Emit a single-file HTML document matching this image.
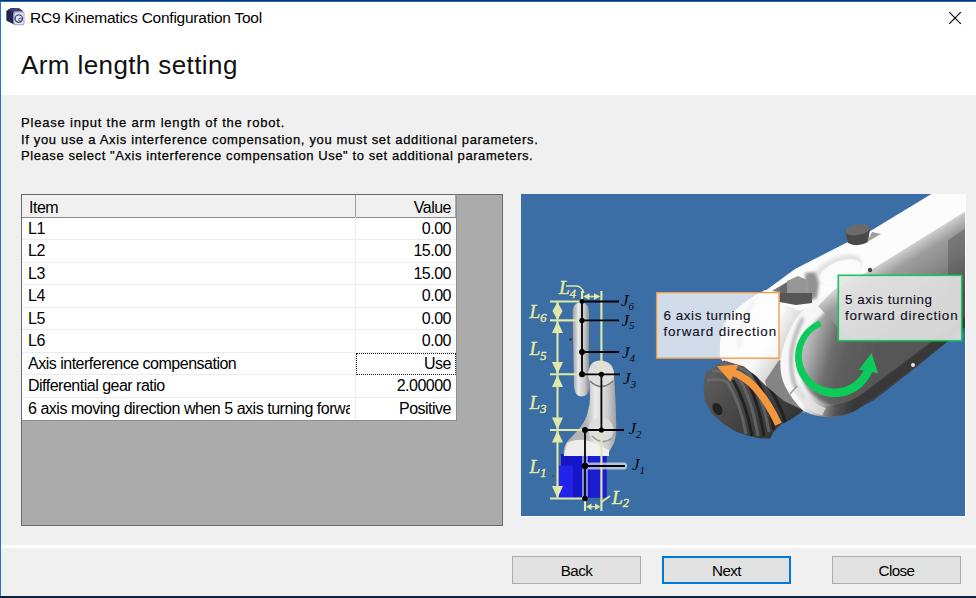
<!DOCTYPE html>
<html lang="en">
<head>
<meta charset="utf-8">
<title>RC9 Kinematics Configuration Tool</title>
<style>
html,body{margin:0;padding:0;}
body{width:976px;height:598px;overflow:hidden;background:#f0f0f0;font-family:"Liberation Sans",sans-serif;color:#000;position:relative;}
.abs{position:absolute;}
.t{position:absolute;white-space:nowrap;line-height:1;}
#frameTop{left:0;top:0;width:976px;height:2px;background:#0d2f5e;}
#frameTop2{left:0;top:1px;width:976px;height:1px;background:#1a6fc9;}
#frameLeft{left:0;top:1px;width:1px;height:596px;background:#1a78d6;}
#frameBottom{left:0;top:596.4px;width:976px;height:1.6px;background:#0c2340;}
#head{left:1px;top:2px;width:975px;height:93px;background:#fff;}
#titletxt{left:30px;top:10px;font-size:15.5px;letter-spacing:-0.25px;}
#h1{left:21px;top:52px;font-size:26px;color:#111;letter-spacing:0.4px;}
.ins{left:21px;font-size:13px;letter-spacing:0.8px;-webkit-text-stroke:0.25px #000;}
#panel{left:21px;top:194px;width:480px;height:329.5px;background:#ababab;border:1px solid #6a6a6a;}
#grid{left:22px;top:195px;width:434px;height:225px;background:#fff;box-shadow:1px 1px 0 #8f8f8f;}
.row{position:absolute;left:0;width:434px;height:22.56px;border-bottom:1px solid #ececec;box-sizing:border-box;}
.row .c1{position:absolute;left:6px;top:2px;font-size:16px;letter-spacing:-0.5px;white-space:nowrap;width:322px;overflow:hidden;}
.row .c2{position:absolute;right:5px;top:2px;font-size:16px;letter-spacing:-0.5px;white-space:nowrap;text-align:right;}
#hdr{position:absolute;left:0;top:0;width:434px;height:22px;background:#f0f0f0;border-bottom:1px solid #8a8a8a;}
#coldiv{left:333px;top:0;width:1px;height:225px;background:#ececec;}
#hdrdiv{left:333px;top:0;width:1px;height:22px;background:#a0a0a0;}
#focus{left:334px;top:158px;width:98px;height:20px;border:1px dotted #222;}
#sep{left:1px;top:544.5px;width:975px;height:3px;background:#fff;}
.btn{position:absolute;top:556px;width:127px;height:26px;background:#e1e1e1;border:1px solid #adadad;font-size:15.2px;letter-spacing:-0.6px;text-align:center;line-height:28px;}
#next{border:2px solid #0078d7;width:125px;height:24px;line-height:26px;}
#pic{left:521px;top:194px;width:444px;height:321.5px;}
</style>
</head>
<body>
<div class="abs" id="head"></div>
<div class="abs" id="frameTop"></div>
<div class="abs" id="frameTop2"></div>
<div class="abs" id="frameLeft"></div>
<div class="abs" id="frameBottom"></div>

<svg class="abs" id="appicon" style="left:4px;top:6px" width="22" height="21" viewBox="4 6 22 21">
  <g filter="url(#ib)">
  <path d="M6.3 11 L11 8 L19.5 8.6 L23.5 11.5 L14 12.5 L14 24.5 L6.3 20.5 Z" fill="#22264f"/>
  <path d="M11 8 L19.5 8.6 L23.5 11.5 L14 12 L8 10 Z" fill="#3c4170"/>
  <rect x="13.2" y="11.3" width="11.3" height="14" rx="2.2" fill="#a5a9c6"/>
  <rect x="14.6" y="12.8" width="9" height="11.4" rx="1.8" fill="#e3e5f0"/>
  <circle cx="18.8" cy="18.6" r="3.7" fill="none" stroke="#454a78" stroke-width="1.3"/>
  <circle cx="20.2" cy="19.6" r="1.6" fill="#d8dae8" stroke="#50558a" stroke-width="1"/>
  </g>
  <defs><filter id="ib"><feGaussianBlur stdDeviation="0.45"/></filter></defs>
</svg>
<div class="t" id="titletxt">RC9 Kinematics Configuration Tool</div>
<svg class="abs" style="left:947px;top:11px" width="15" height="15" viewBox="0 0 15 15"><path d="M2.2 1.2 L13.8 12.8 M13.8 1.2 L2.2 12.8" stroke="#000" stroke-width="1.15" fill="none"/></svg>

<div class="t" id="h1">Arm length setting</div>

<div class="t ins" style="top:116px">Please input the arm length of the robot.</div>
<div class="t ins" style="top:133px;letter-spacing:0.66px">If you use a Axis interference compensation, you must set additional parameters.</div>
<div class="t ins" style="top:149px;letter-spacing:0.58px">Please select "Axis interference compensation Use" to set additional parameters.</div>

<div class="abs" id="panel"></div>
<div class="abs" id="grid">
  <div id="hdr"><div class="t" style="left:7px;top:4.5px;font-size:16px;letter-spacing:-0.5px">Item</div><div class="t" style="right:5px;top:4.5px;font-size:16px;letter-spacing:-0.5px">Value</div></div>
  <div class="abs" id="coldiv"></div>
  <div class="abs" id="hdrdiv"></div><div class="abs" style="left:433px;top:0;width:1px;height:22px;background:#a8a8a8"></div>
  <div class="row" style="top:22.5px"><div class="c1">L1</div><div class="c2">0.00</div></div>
  <div class="row" style="top:45.1px"><div class="c1">L2</div><div class="c2">15.00</div></div>
  <div class="row" style="top:67.6px"><div class="c1">L3</div><div class="c2">15.00</div></div>
  <div class="row" style="top:90.2px"><div class="c1">L4</div><div class="c2">0.00</div></div>
  <div class="row" style="top:112.7px"><div class="c1">L5</div><div class="c2">0.00</div></div>
  <div class="row" style="top:135.3px"><div class="c1">L6</div><div class="c2">0.00</div></div>
  <div class="row" style="top:157.8px"><div class="c1">Axis interference compensation</div><div class="c2">Use</div></div>
  <div class="row" style="top:180.4px"><div class="c1">Differential gear ratio</div><div class="c2">2.00000</div></div>
  <div class="row" style="top:202.9px;border-bottom:none"><div class="c1" style="letter-spacing:-0.47px">6 axis moving direction when 5 axis turning forward</div><div class="c2">Positive</div></div>
  <div class="abs" id="focus"></div>
</div>

<svg class="abs" id="pic" viewBox="521 194 444 321.5" preserveAspectRatio="none">
  <defs>
    <linearGradient id="gLink" x1="0" x2="1" y1="0" y2="0">
      <stop offset="0" stop-color="#9c9c9c"/><stop offset="0.35" stop-color="#e9e9e9"/><stop offset="0.75" stop-color="#c4c4c4"/><stop offset="1" stop-color="#8e8e8e"/>
    </linearGradient>
    <linearGradient id="gLink2" gradientUnits="userSpaceOnUse" x1="586" x2="617" y1="0" y2="0">
      <stop offset="0" stop-color="#b4b4b4"/><stop offset="0.3" stop-color="#ececec"/><stop offset="0.7" stop-color="#cdcdcd"/><stop offset="1" stop-color="#9a9a9a"/>
    </linearGradient>
    <linearGradient id="gBase" x1="0" x2="1" y1="0" y2="0">
      <stop offset="0" stop-color="#2a2ae0"/><stop offset="0.3" stop-color="#1414cc"/><stop offset="1" stop-color="#0c0cb4"/>
    </linearGradient>
    <filter id="b05" x="-20%" y="-20%" width="140%" height="140%"><feGaussianBlur stdDeviation="0.4"/></filter>
    <filter id="b1" x="-20%" y="-20%" width="140%" height="140%"><feGaussianBlur stdDeviation="0.7"/></filter>
    <filter id="b2" x="-20%" y="-20%" width="140%" height="140%"><feGaussianBlur stdDeviation="1.6"/></filter>
    <filter id="b4" x="-20%" y="-20%" width="140%" height="140%"><feGaussianBlur stdDeviation="4"/></filter>
    <filter id="b8" x="-30%" y="-30%" width="160%" height="160%"><feGaussianBlur stdDeviation="8"/></filter>
  </defs>
  <rect x="521" y="194" width="444" height="322" fill="#3a6ea5"/>

  <!-- ===== small robot diagram ===== -->
  <g id="mini">
    <g filter="url(#b1)">
      <!-- base blue -->
      <path d="M561 454 L606.5 454 L606.5 497.5 L561 498 Z" fill="#1515c6"/>
      <path d="M558.5 465.5 L573 465.5 L573 498 L558.5 498 Z" fill="#2424ea"/>
      <path d="M590 456 L606.5 456 L606.5 497 L590 497.5 Z" fill="#1c1cd2" opacity="0.8"/>
      <!-- lower link + shoulder -->
      <path d="M589 372 Q589 361 600 360.5 Q613 361 614 372.5 L615.7 405 L616.4 430 Q616 438 614 443 L609 452 L609 456 L563.8 456 L563.8 451.5 Q564 445 567.5 441.5 L580 427.7 Q586 420 587.6 412.6 Q590 405 590 397.6 Z" fill="url(#gLink2)"/>
      <path d="M567 443 Q580 436 596 444 L609 450 L609 456 L563.8 456 Z" fill="#f2f2f2" opacity="0.9"/>
      <circle cx="601" cy="430" r="12.5" fill="#dedede" opacity="0.9"/>
      <path d="M592 436 Q602 446 612 438" stroke="#9a9a9a" stroke-width="1.6" fill="none"/>
      <!-- upper link -->
      <path d="M572.6 312 Q572.6 302.5 581 302.5 Q589 302.5 589 312 L589 388 Q589 396.5 581 396.5 Q575 396.5 574 386 Z" fill="url(#gLink)"/>
      <circle cx="601" cy="374.5" r="13" fill="#dfdfdf"/>
      <path d="M590 381 Q601 392 613 381" stroke="#777" stroke-width="1.6" fill="none"/>
    </g>
    <!-- J1 white glow -->
    <rect x="584" y="462.4" width="43" height="7.2" rx="3" fill="#fff" opacity="0.62" filter="url(#b1)"/>
    <rect x="582" y="452" width="6" height="48" rx="3" fill="#dfe3ff" opacity="0.55" filter="url(#b1)"/>
    <circle cx="570.5" cy="339.5" r="1.3" fill="#333"/>
    <circle cx="553.5" cy="476" r="1.5" fill="#555"/>
    <!-- yellow dimension lines -->
    <g filter="url(#b05)">
    <g stroke="#dfe8a6" stroke-width="2.1" fill="none">
      <path d="M557.5 301.5 V498.5"/>
      <path d="M550 301.5 H582 M550 320.4 H582 M550 374.3 H582 M550 430 H585 M550 498.5 H585"/>
      <path d="M582 291 V301 M601.4 291 V374 M601.4 430 V511 M585 498 V511"/>
      <path d="M601.4 502 L610 496" stroke-width="1.6"/>
      <path d="M566 286 H577 Q582 287 584 293" stroke-width="1.4"/>
    </g>
    <g fill="#dfe8a6">
      <!-- vertical arrowheads -->
      <path d="M557.5 302 l-5 9 h10z M557.5 320 l-5 -9 h10z"/>
      <path d="M557.5 321 l-5.5 12 h11z M557.5 374 l-5.5 -12 h11z"/>
      <path d="M557.5 375 l-5.5 12 h11z M557.5 429.5 l-5.5 -12 h11z"/>
      <path d="M557.5 430.5 l-5.5 12 h11z M557.5 498 l-5.5 -12 h11z"/>
      <!-- L4 arrows -->
      <path d="M583 296.5 l6.5 -3.3 v6.6z M600.5 296.5 l-6.5 -3.3 v6.6z"/>
      <rect x="588" y="295.7" width="7" height="1.6"/>
      <!-- L2 arrows -->
      <path d="M586 506.7 l5.5 -3.2 v6.4z M600.5 506.7 l-5.5 -3.2 v6.4z"/>
      <rect x="590" y="506" width="6" height="1.4"/>
    </g>
    </g>
    <!-- black skeleton -->
    <g stroke="#000" stroke-width="1.8" fill="none">
      <path d="M582 301.5 V374.3 H601.4 V430 H585 V498.5"/>
      <path d="M582 301.5 H619 M582 320.4 H619 M582 352 H619 M601 374.3 H620 M601 430 H624 M585 466 H625"/>
    </g>
    <g fill="#000">
      <circle cx="582" cy="301.5" r="2.4"/><circle cx="582" cy="320.4" r="2.6"/><circle cx="582" cy="352" r="3"/>
      <circle cx="582" cy="374.3" r="3"/><circle cx="601.4" cy="374.3" r="2.6"/><circle cx="585" cy="430" r="3"/>
      <circle cx="601.4" cy="430" r="2.6"/><circle cx="585" cy="466" r="3.2"/><circle cx="585" cy="498.5" r="2.8"/>
    </g>
    <!-- labels -->
    <g font-family="'Liberation Serif',serif" font-style="italic" fill="#37566f" font-size="19.5" transform="translate(1 1)" opacity="0.8">
      <text x="559" y="294">L<tspan font-size="12.5" dy="4">4</tspan></text>
      <text x="529.5" y="317.5">L<tspan font-size="12.5" dy="4.3">6</tspan></text>
      <text x="529.5" y="355">L<tspan font-size="12.5" dy="4.5">5</tspan></text>
      <text x="529.5" y="409">L<tspan font-size="12.5" dy="4">3</tspan></text>
      <text x="529.5" y="473">L<tspan font-size="12.5" dy="4">1</tspan></text>
      <text x="612" y="503.5">L<tspan font-size="12.5" dy="3.5">2</tspan></text>
    </g>
    <g font-family="'Liberation Serif',serif" font-style="italic" fill="#e3eab0" font-size="19.5" stroke="#e3eab0" stroke-width="0.45">
      <text x="559" y="294">L<tspan font-size="12.5" dy="4">4</tspan></text>
      <text x="529.5" y="317.5">L<tspan font-size="12.5" dy="4.3">6</tspan></text>
      <text x="529.5" y="355">L<tspan font-size="12.5" dy="4.5">5</tspan></text>
      <text x="529.5" y="409">L<tspan font-size="12.5" dy="4">3</tspan></text>
      <text x="529.5" y="473">L<tspan font-size="12.5" dy="4">1</tspan></text>
      <text x="612" y="503.5">L<tspan font-size="12.5" dy="3.5">2</tspan></text>
    </g>
    <g font-family="'Liberation Serif',serif" font-style="italic" fill="#0a0a0a" font-size="17">
      <text x="621" y="306">J<tspan font-size="11" dy="3.5">6</tspan></text>
      <text x="621.5" y="325.5">J<tspan font-size="11" dy="3.5">5</tspan></text>
      <text x="622" y="358">J<tspan font-size="11" dy="3.5">4</tspan></text>
      <text x="623" y="384">J<tspan font-size="11" dy="3.5">3</tspan></text>
      <text x="628.5" y="434">J<tspan font-size="11" dy="3.5">2</tspan></text>
      <text x="632" y="470">J<tspan font-size="11" dy="3.5">1</tspan></text>
    </g>
  </g>
  <!-- BIGARM -->
  <defs>
    <clipPath id="picclip"><rect x="521" y="194" width="444" height="321.5"/></clipPath>
    <linearGradient id="gRim" gradientUnits="userSpaceOnUse" x1="803" y1="395" x2="856" y2="410">
      <stop offset="0" stop-color="#f7f7f7"/><stop offset="0.3" stop-color="#c0c0c0"/><stop offset="0.65" stop-color="#6a6a6a"/><stop offset="1" stop-color="#404040"/>
    </linearGradient>
    <linearGradient id="gFace" gradientUnits="userSpaceOnUse" x1="798" y1="345" x2="875" y2="368">
      <stop offset="0" stop-color="#c8c8c8"/><stop offset="0.15" stop-color="#b0b0b0"/><stop offset="0.3" stop-color="#8c8c8c"/>
      <stop offset="0.42" stop-color="#6e6e6e"/><stop offset="0.6" stop-color="#5e5e5e"/><stop offset="1" stop-color="#565656"/>
    </linearGradient>
    <linearGradient id="gTopBand" gradientUnits="userSpaceOnUse" x1="905" y1="247" x2="944.4" y2="310.8">
      <stop offset="0" stop-color="#d6d6d6" stop-opacity="1"/><stop offset="0.08" stop-color="#bdbdbd" stop-opacity="1"/><stop offset="0.2" stop-color="#9c9c9c" stop-opacity="1"/><stop offset="0.48" stop-color="#878787" stop-opacity="1"/><stop offset="0.78" stop-color="#6c6c6c" stop-opacity="0.8"/><stop offset="1" stop-color="#5a5a5a" stop-opacity="0"/>
    </linearGradient>
    <linearGradient id="gBot" gradientUnits="userSpaceOnUse" x1="815" y1="410" x2="856" y2="410">
      <stop offset="0" stop-color="#343434" stop-opacity="0"/><stop offset="1" stop-color="#343434" stop-opacity="0.78"/>
    </linearGradient>
    <linearGradient id="gFlange" gradientUnits="userSpaceOnUse" x1="720" y1="365" x2="790" y2="430">
      <stop offset="0" stop-color="#5c5c5c"/><stop offset="0.5" stop-color="#444"/><stop offset="1" stop-color="#333"/>
    </linearGradient>
    <linearGradient id="gHousing" gradientUnits="userSpaceOnUse" x1="722" y1="340" x2="795" y2="380">
      <stop offset="0" stop-color="#ebebeb"/><stop offset="0.45" stop-color="#fafafa"/><stop offset="0.75" stop-color="#d2d2d2"/><stop offset="1" stop-color="#9a9a9a"/>
    </linearGradient>
  </defs>
  <g clip-path="url(#picclip)">
   <g filter="url(#b1)">
    <!-- J6 housing (white cylinder) -->
    <path d="M765 290 Q735 305 723 326 Q719 340 720 358 L724 363 L742 370 L756 380 L768 392 L783 404 L804 413 L812 400 L800 330 L830 290 Z" fill="url(#gHousing)"/>
    <!-- crease on housing -->
    <path d="M754 301 Q738 322 739 349" fill="none" stroke="#b9b9b9" stroke-width="3" filter="url(#b2)"/>
    <!-- shadow side of housing between housing and rim -->
    <path d="M779 360 L765 381 L768 392 L783 404 L804 413 L809 405 Q790 390 784 362 Z" fill="#848484"/>
    <!-- flange (dark discs) -->
    <clipPath id="flclip"><path d="M724 360.5 L716.5 365.8 L705 373.5 L703.4 387.4 L705 401 L711.8 413.5 L724 424.3 L736.5 432 L748.8 436 L759.5 438.3 L770.3 438.5 L773.4 432 L781 424.3 L790.3 419.7 L804 410.5 L784 401 L767 387 L756.5 376.6 L744 366.6 Z"/></clipPath>
    <path d="M724 360.5 L716.5 365.8 L705 373.5 L703.4 387.4 L705 401 L711.8 413.5 L724 424.3 L736.5 432 L748.8 436 L759.5 438.3 L770.3 438.5 L773.4 432 L781 424.3 L790.3 419.7 L804 410.5 L784 401 L767 387 L756.5 376.6 L744 366.6 Z" fill="url(#gFlange)"/>
    <g clip-path="url(#flclip)">
      <g fill="none" stroke="#6e6e6e" stroke-width="3" opacity="0.75">
        <path d="M707 380 Q722 378 728 383 Q741 405 746 434"/>
        <path d="M712 371 Q730 370 739 378 Q752 400 758 436"/>
        <path d="M720 364 Q742 366 749 374 Q763 397 769 432"/>
      </g>
      <g fill="none" stroke="#1d1d1d" stroke-width="3" opacity="0.85">
        <path d="M733 380 Q746 402 752 436"/>
        <path d="M744 376 Q758 398 764 436"/>
        <path d="M753 373 Q768 396 774 430"/>
        <path d="M764 380 Q778 398 786 424"/>
      </g>
      <ellipse cx="717.5" cy="409" rx="4.5" ry="6.5" transform="rotate(-30 717.5 409)" fill="#232323"/>
    </g>
    <!-- near prong: white rim (outer silhouette) -->
    <path d="M966 209 L870 268 L836 285 L811 303 Q797 313 790 330 Q783 344 780.5 360 Q779.5 375 785 386 Q792 400 803.4 411 Q815 417 833 417.5 Q850 415 861 407 L874 400 L914 369 L947 342 L966 326 Z" fill="url(#gRim)"/>
    <path d="M803 318 Q794 335 791.5 352 Q790 370 794 383 Q798 392 805 399" fill="none" stroke="#a8a8a8" stroke-width="4" opacity="0.8" filter="url(#b2)"/>
    <!-- gray inner face -->
    <path d="M966 209 L872 268 L850 291 L826 311 Q806 328 800 348 Q797 372 806 388 Q818 403 836 406 Q850 405 862 396 L947 332 L966 316 Z" fill="url(#gFace)" filter="url(#b2)"/>
    <!-- light band along top of face -->
    <path d="M966 209 L870 268 L836 288 L818 306 L845 335 L880 345 L966 345 Z" fill="url(#gTopBand)"/>
    <!-- darker right end -->
    <path d="M948 240 L966 228 L966 330 L948 343 Z" fill="#4a4a4a" opacity="0.4" filter="url(#b1)"/>
    <!-- bottom edge shading -->
    <path d="M812 418 Q850 417 861 407 L947 342 L966 326 L966 316 L862 394 Q850 404 816 408 Z" fill="url(#gBot)" filter="url(#b1)"/>
    <path d="M793 390 Q803 410 822 415.5 L826 408 Q811 404 801 385 Z" fill="#e8e8e8" opacity="0.75" filter="url(#b1)"/>
    <path d="M797 386 L790 394" stroke="#999" stroke-width="1.5"/>
    <!-- top white strip of forearm incl. area down to the rim -->
    <path d="M933 193 L966 193 L966 211 L871 270 L838 287 L814 303 L800 311 L779 302 L765 291 L795 269 L840 246 L872 230 Z" fill="#fcfcfc"/>
    <!-- concave dome on top strip -->
    <ellipse cx="838" cy="269" rx="25" ry="12" transform="rotate(-22 838 269)" fill="#e3e3e3" filter="url(#b2)"/>
    <ellipse cx="840" cy="272" rx="22" ry="10.5" transform="rotate(-22 840 272)" fill="#fbfbfb" filter="url(#b1)"/>
    <!-- recess block -->
    <path d="M805 273 L815 272 L819 284 L817 298 L806 302 Z" fill="#6e6e6e" opacity="0.75" filter="url(#b2)"/>
    <path d="M772 291 L787 282 L787 293 Z" fill="#777"/>
    <path d="M780 287 L787 283 L787 293 L780 293 Z" fill="#686868"/>
    <path d="M787 281 L798 276 L807 280 L807 293 L787 293 Z" fill="#969696"/>
    <path d="M779.5 293 L812 293 L812 303 L796 305 L779.5 302 Z" fill="#565656"/>
    <!-- knob -->
    <path d="M845 230 L848 243 Q858 248 868 242 L870 229 Z" fill="#484848"/>
    <ellipse cx="857.5" cy="229.8" rx="12.5" ry="5.3" transform="rotate(-10 857.5 229.8)" fill="#6a6a6a"/>
    <path d="M867 242 L881 234 L872 232 Z" fill="#a0a0a0"/>
    <!-- little things -->
    <circle cx="870" cy="270" r="2.2" fill="#444"/>
    <circle cx="913" cy="365" r="2" fill="#e8e8e8"/>
   </g>
   <!-- orange arrow -->
   <path d="M778.4 424.2 Q757.7 380.2 733 372.5" fill="none" stroke="#f4973d" stroke-width="7.3"/>
   <path d="M716.8 366.3 L738.6 364.4 L730.3 381.4 Z" fill="#f4973d"/>
   <!-- green arrow -->
   <path d="M819.1 320.4 A40 40 0 1 0 872.6 370.8 L864.2 369.3 A32.6 32.6 0 1 1 821.8 325.9 Z" fill="#0ccb5b"/>
   <path d="M871.7 353 L858.9 369.8 L878 373.3 Z" fill="#0ccb5b"/>
   <!-- callout boxes -->
   <rect x="656.6" y="292.6" width="122.4" height="65.6" fill="#ffffff" fill-opacity="0.76" stroke="#f0983e" stroke-width="1.3"/>
   <rect x="838.3" y="275.3" width="123.4" height="65.4" fill="#e4e4e4" fill-opacity="0.9" stroke="#19c45c" stroke-width="1.6"/>
   <g font-family="'Liberation Sans',sans-serif" font-size="13.4" fill="#10101c" stroke="#10101c" stroke-width="0.12" letter-spacing="0.85">
     <text x="663.5" y="320" letter-spacing="0.57">6 axis turning</text>
     <text x="663.5" y="336">forward direction</text>
     <text x="845" y="304.2" letter-spacing="0.57">5 axis turning</text>
     <text x="845" y="320.4">forward direction</text>
   </g>
  </g>
</svg>

<div class="abs" style="left:965px;top:194px;width:1px;height:322.5px;background:#fff"></div>
<div class="abs" style="left:521px;top:515.5px;width:445px;height:1px;background:#fff"></div>
<div class="abs" id="sep"></div>
<div class="btn" style="left:512px">Back</div>
<div class="btn" id="next" style="left:662px">Next</div>
<div class="btn" style="left:832px">Close</div>
</body>
</html>
